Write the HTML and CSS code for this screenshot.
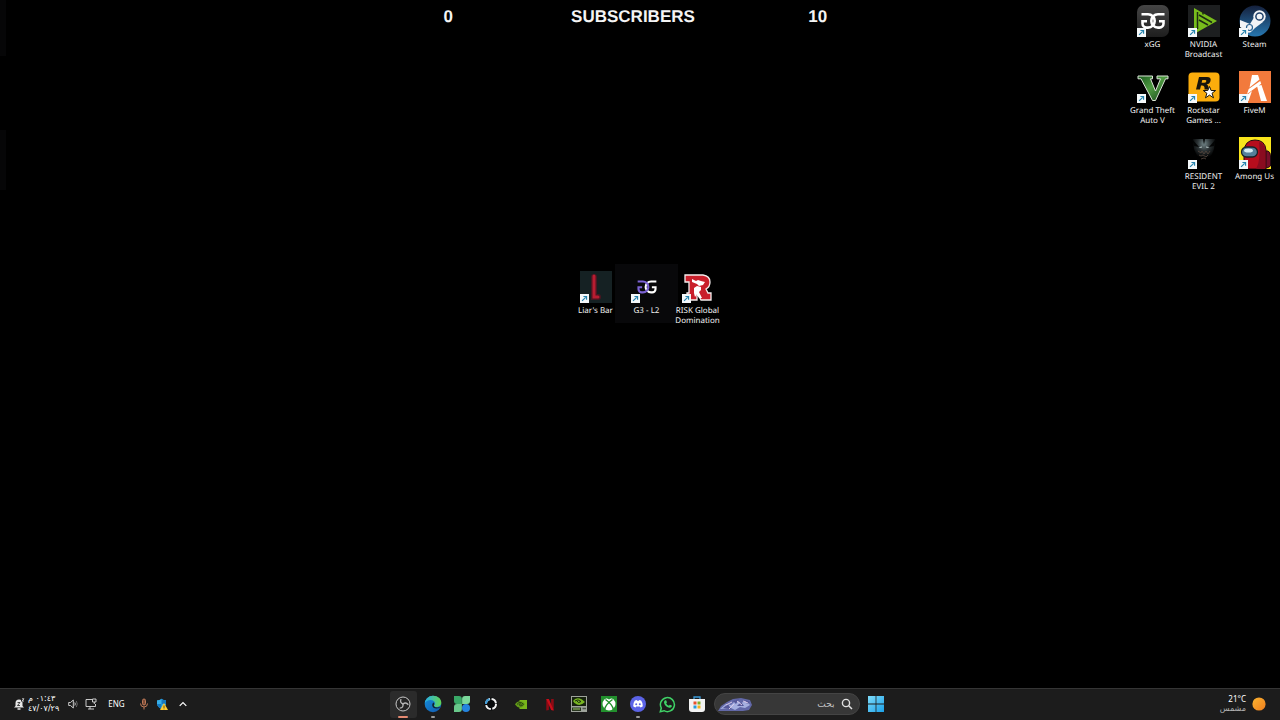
FILE: index.html
```html
<!DOCTYPE html>
<html lang="en">

<head>
    <meta charset="utf-8">
    <title>Desktop</title>
    <link rel="stylesheet" href="styles.css">
</head>

<body>
    <svg class="defs" aria-hidden="true">
        <symbol id="arrow" viewBox="0 0 10 10">
            <path d="M0 0h10v10H0z" fill="#f4f8fa"/>
            <path d="M2.3 7.7l4-4M3.8 2.8h3.5v3.5" fill="none" stroke="#2482ad" stroke-width="1.3"/>
        </symbol>
        <symbol id="letter-g" viewBox="0 0 32 32">
            <path d="M27.500 9.200H21a6.700 6.700 0 0 0 0 13.400h1.500a4 4 0 0 0 4-4v-2.300h-4.500" fill="none" stroke="currentColor" stroke-width="2.600"/>
        </symbol>
    </svg>

    <main class="desktop">
        <header class="counter">
            <span>0</span>
            <span>SUBSCRIBERS</span>
            <span>10</span>
        </header>

        <div class="edge edge-top"></div>
        <div class="edge edge-low"></div>

        <nav class="shortcuts shortcuts-right">
            <a class="shortcut" href="#">
                <svg class="icon" viewBox="0 0 32 32">
                    <defs><linearGradient id="xgg" x2="0" y2="1"><stop stop-color="#454545"/><stop offset="1" stop-color="#1e1e1e"/></linearGradient></defs>
                    <rect width="32" height="32" rx="7" fill="url(#xgg)"/>
                    <g color="#fff">
                        <use href="#letter-g" width="32" height="32"/>
                        <use href="#letter-g" width="32" height="32" transform="matrix(-1 0 0 1 32 0)"/>
                    </g>
                    <use href="#arrow" y="23" width="9" height="9"/>
                </svg>
                <span>xGG</span>
            </a>
            <a class="shortcut" href="#">
                <svg class="icon" viewBox="0 0 32 32">
                    <rect width="32" height="32" fill="#1d1f20"/>
                    <path d="M6 3l23 13L6 29z" fill="#78bd1c"/>
                    <path d="M9.500 7v17M11 10l13 7.500M11 15l9 5M15 6v3.500" fill="none" stroke="#1d2a12" stroke-width="1.500"/>
                    <use href="#arrow" y="23" width="9" height="9"/>
                </svg>
                <span>NVIDIA Broadcast</span>
            </a>
            <a class="shortcut" href="#">
                <svg class="icon" viewBox="0 0 32 32">
                    <defs><linearGradient id="steam" x2="0" y2="1"><stop stop-color="#15203c"/><stop offset="1" stop-color="#2777b0"/></linearGradient></defs>
                    <circle cx="16" cy="16" r="15.500" fill="url(#steam)"/>
                    <path d="M1 15l10 4 5-8 8 6-8 6-3 3a4 4 0 0 1-7-1L1 22z" fill="#f2f4f6"/>
                    <circle cx="20.500" cy="11.500" r="6.200" fill="#f2f4f6"/>
                    <circle cx="20.500" cy="11.500" r="3.600" fill="#f2f4f6" stroke="#1f4069" stroke-width="1.500"/>
                    <circle cx="10.500" cy="22.500" r="3" fill="none" stroke="#2a6392" stroke-width="1.200"/>
                    <use href="#arrow" y="23" width="9" height="9"/>
                </svg>
                <span>Steam</span>
            </a>
            <a class="shortcut" href="#">
                <svg class="icon" viewBox="0 0 32 32">
                    <defs><linearGradient id="gta" x2="1" y2="1"><stop stop-color="#1c5a20"/><stop offset=".45" stop-color="#4f9c42"/><stop offset="1" stop-color="#143d18"/></linearGradient></defs>
                    <path d="M1 5h14.500v2.800h-2L18.500 20l5-12.200h-3.500V5h11v2.800h-2.500L18.500 29.500h-3L4 7.800H1z" fill="url(#gta)" stroke="#dce6d8"/>
                    <use href="#arrow" y="23" width="9" height="9"/>
                </svg>
                <span>Grand Theft Auto V</span>
            </a>
            <a class="shortcut" href="#">
                <svg class="icon" viewBox="0 0 32 32">
                    <rect x=".5" y="1.500" width="31" height="29" rx="4" fill="#fbad0c"/>
                    <path d="M11 6h8q4.500 0 3.500 4-.7 3-4 3.500 2.500.8 2 5h-4q.5-4-2.500-4h-1l-1 4H8zm3.300 3l-.7 2.800h2.500q1.900 0 2.200-1.500.3-1.300-1.300-1.300z" fill="#18140c"/>
                    <path d="M21.500 15.500l1.600 4h4.500L24 22.300l1.500 4.500-4-2.700-4 2.700 1.400-4.500-3.600-2.800h4.500z" fill="#fff" stroke="#18140c"/>
                    <use href="#arrow" y="23" width="9" height="9"/>
                </svg>
                <span>Rockstar Games ...</span>
            </a>
            <a class="shortcut" href="#">
                <svg class="icon" viewBox="0 0 32 32">
                    <rect width="32" height="32" fill="#f27a3c"/>
                    <path d="M13 4h6l1.500 4.500-10 8zM9.700 18l11.500-8 1 2.800L8 23zM7.500 24.500L13 20 9.500 30H5.800zM18 15l4.500-1L28 30h-6z" fill="#fff"/>
                    <use href="#arrow" y="23" width="9" height="9"/>
                </svg>
                <span>FiveM</span>
            </a>
            <a class="shortcut shortcut-second" href="#">
                <svg class="icon" viewBox="0 0 32 32">
                    <defs><radialGradient id="evil" cx=".5" cy=".2" r=".6"><stop stop-color="#74878a"/><stop offset=".5" stop-color="#2b3234"/><stop offset="1" stop-color="#000"/></radialGradient></defs>
                    <path d="M5 2h22l-1 10-3 8-7 6-6-5-4-9z" fill="url(#evil)"/>
                    <path d="M4 2l7 8-5-1zM28 2l-7 8 5-1zM15 2l1 6 1-6z" fill="#030404"/>
                    <path d="M11.500 10.500l2.500-.5M18 10l2.500.5" stroke="#b4c4c4"/>
                    <path d="M10 14l3 2 1-2 2 3 2-3 2 3 2-3M11 18l2 1 2-1 3 2 2-2M13 22l3-1 2 1" fill="none" stroke="#57483f" stroke-width=".8"/>
                    <use href="#arrow" y="23" width="9" height="9"/>
                </svg>
                <span>RESIDENT EVIL 2</span>
            </a>
            <a class="shortcut" href="#">
                <svg class="icon" viewBox="0 0 32 32">
                    <rect width="32" height="32" fill="#f9e51c"/>
                    <path d="M26 14h3q2.500 1 2.500 5v10q-2 2-5.500 2z" fill="#780d29" stroke="#240a12"/>
                    <path d="M5 32V14Q6 3 16 3q10 0 11 10v19z" fill="#b60d1d" stroke="#240a12"/>
                    <path d="M20 5q6 2 6 9v18h-9q5-8 3-27z" fill="#8a0c20"/>
                    <rect x="2.500" y="10" width="16" height="10" rx="5" fill="#55809b" stroke="#182229" stroke-width="1.300"/>
                    <ellipse cx="9.500" cy="13.500" rx="4.500" ry="2" fill="#d5edf5"/>
                    <use href="#arrow" y="23" width="9" height="9"/>
                </svg>
                <span>Among Us</span>
            </a>
        </nav>

        <nav class="shortcuts shortcuts-middle">
            <a class="shortcut" href="#">
                <svg class="icon" viewBox="0 0 32 32">
                    <rect width="32" height="32" fill="#152123"/>
                    <path d="M14 6v20h4" fill="none" stroke="#4a1621" stroke-width="6" stroke-linecap="round"/>
                    <path d="M14 5v21h4" fill="none" stroke="#b81c31" stroke-width="3" stroke-linecap="round"/>
                    <use href="#arrow" y="23" width="9" height="9"/>
                </svg>
                <span>Liar's Bar</span>
            </a>
            <a class="shortcut shortcut-hover" href="#">
                <svg class="icon" viewBox="0 0 32 32">
                    <use href="#letter-g" x="3" y="3" width="26" height="26" color="#fff"/>
                    <use href="#letter-g" x="3" y="3" width="26" height="26" color="#7c63d4" transform="matrix(-1 0 0 1 32 0)"/>
                    <use href="#arrow" y="23" width="9" height="9"/>
                </svg>
                <span>G3 - L2</span>
            </a>
            <a class="shortcut" href="#">
                <svg class="icon" viewBox="0 0 32 32">
                    <path d="M3 4h18q7 1 7 7 0 5-4 7l2 4h3v7H19l-4-7v7H5v-7h2V11H3z" fill="#c91f2b" stroke="#f5eeee" stroke-width="1.300"/>
                    <path d="M10 8l4 2 2-1 3 1 4 1-2 3-4 1-2-2-5-2zM12 17l3-2 4 1v3l-2 2 3 6h-3l-2-4-2 3-1-4z" fill="#fff"/>
                    <use href="#arrow" y="23" width="9" height="9"/>
                </svg>
                <span>RISK Global Domination</span>
            </a>
        </nav>
    </main>

    <footer class="taskbar">
        <div class="tray">
            <button class="clock">
                <svg width="12" height="12" viewBox="0 0 12 12">
                    <path d="M2.500 8V5a3.500 3.500 0 0 1 7 0v3l1.500 1.500H1z" fill="#e8e8e8"/>
                    <path d="M4.500 11h3" stroke="#e8e8e8" stroke-width="1.500"/>
                    <path d="M8 0h4v3.500H8z" fill="#1c1c1c"/>
                    <path d="M9 .8h2L9 3h2" fill="none" stroke="#e8e8e8" stroke-width=".8"/>
                    <path d="M4.500 4.500H7l-2.500 3H7" fill="none" stroke="#1c1c1c" stroke-width=".8"/>
                </svg>
                <span class="clock-text" dir="rtl" lang="ar"><span>٠١:٤٣ م</span><span>٤٧/٠٧/٢٩</span></span>
            </button>
            <button class="status" aria-label="Volume and network">
                <svg width="11" height="12" viewBox="0 0 11 12" fill="none" stroke="#dedede" stroke-width=".9">
                    <path d="M.7 4.500h1.800L5.300 2v8L2.500 7.500H.7zM6.800 4.500q1 1.500 0 3"/>
                    <path d="M8.300 3q2 3 0 6" stroke="#707070"/>
                </svg>
                <svg width="12" height="12" viewBox="0 0 12 12" fill="none" stroke="#dedede" stroke-width=".9">
                    <path d="M7 1.500H1v7h9.500V6M3 11h6M5 8.500V11M7.500 1h3.500v3H7.500zM9.300 4v2"/>
                </svg>
            </button>
            <button class="lang">ENG</button>
            <button class="tray-icon" aria-label="Microphone">
                <svg width="12" height="12" viewBox="0 0 12 12" fill="none" stroke="#c07a58">
                    <rect x="4.500" y="1" width="3" height="6" rx="1.500" fill="#7d4d38"/>
                    <path d="M2.500 5.500q0 3.500 3.500 3.500t3.500-3.500M6 9v2.500"/>
                </svg>
            </button>
            <button class="tray-icon" aria-label="Security">
                <svg width="12" height="12" viewBox="0 0 12 12">
                    <path d="M5.500.7q2 1.500 4.500 1.500V6q-.5 3-4.500 5Q1.500 9 1 6V2.200Q3.500 2.200 5.500.7z" fill="#35aee8"/>
                    <path d="M5.500.7q2 1.500 4.500 1.500V6H5.500zM1 6h4.500v5Q1.500 9 1 6z" fill="#1579c1"/>
                    <path d="M8 5l4 7H4z" fill="#ffcc32"/>
                    <path d="M8 7.500V10M8 10.500v.8" stroke="#4a3812" stroke-width=".8"/>
                </svg>
            </button>
            <button class="tray-icon" aria-label="Show hidden icons">
                <svg width="10" height="10" viewBox="0 0 10 10"><path d="M1.700 6.800L5 3.500l3.300 3.300" fill="none" stroke="#fff" stroke-width="1.200"/></svg>
            </button>
        </div>

        <div class="center">
            <div class="apps">
                <button class="app app-active" aria-label="OBS Studio">
                    <svg width="16" height="16" viewBox="0 0 16 16">
                        <circle cx="8" cy="8" r="7" fill="#242424" stroke="#c9c9c9"/>
                        <g fill="none" stroke="#b5b5b5" stroke-width="1.300">
                            <path d="M8.300 8Q4.500 7 6 3"/>
                            <path d="M8.300 8Q4.500 7 6 3" transform="rotate(120 8 8)"/>
                            <path d="M8.300 8Q4.500 7 6 3" transform="rotate(240 8 8)"/>
                        </g>
                    </svg>
                </button>
                <button class="app app-open" aria-label="Microsoft Edge">
                    <svg width="18" height="18" viewBox="0 0 18 18">
                        <defs>
                            <linearGradient id="edge-a" x2="1"><stop stop-color="#28aee8"/><stop offset="1" stop-color="#62d453"/></linearGradient>
                            <linearGradient id="edge-b" x2="1" y2="1"><stop stop-color="#1690dc"/><stop offset="1" stop-color="#1157ad"/></linearGradient>
                        </defs>
                        <circle cx="9" cy="9" r="8.300" fill="url(#edge-b)"/>
                        <path d="M.7 8.500A8.300 8.300 0 0 1 9 .7c5 0 8.300 3.300 8.300 6.800 0 3-2.300 4.500-4.800 4.500-2 0-2.500-.8-2.500-1.300s1-.9 1-2.400C11 6.500 9 5 6.500 5S1.500 6.500.7 8.500z" fill="url(#edge-a)"/>
                        <path d="M9.500 7.500q-1.500 1-1.300 2.800.5 3.200 4.300 3.200 3 0 4.300-1.800-1.800.9-3.800.8-3-.2-3.200-2 1-1.300 0-3z" fill="#14202a"/>
                    </svg>
                </button>
                <button class="app" aria-label="Clover">
                    <svg width="16" height="16" viewBox="0 0 16 16">
                        <path d="M0 0h5q2.900 0 2.900 3v4.900H3Q0 7.900 0 5z" fill="#39a967"/>
                        <path d="M16 0h-5Q8.100 0 8.100 3v4.900H13q3 0 3-2.900z" fill="#7bd89b"/>
                        <path d="M0 16h5q2.900 0 2.900-3V8.100H3q-3 0-3 2.900z" fill="#69c98b"/>
                        <circle cx="12" cy="12" r="4" fill="#2584df"/>
                    </svg>
                </button>
                <button class="app" aria-label="Game launcher">
                    <svg width="14" height="14" viewBox="0 0 14 14">
                        <circle cx="7" cy="7" r="6.500" fill="#080a0c"/>
                        <circle cx="7" cy="7" r="5" fill="none" stroke="#f3f3f3" stroke-width="2" stroke-dasharray="6.300 1.550"/>
                        <path d="M2 7a5 5 0 0 1 3.500-4.800" fill="none" stroke="#3b9bd8" stroke-width="2"/>
                    </svg>
                </button>
                <button class="app" aria-label="NVIDIA">
                    <svg width="12" height="9" viewBox="0 0 12 9">
                        <path d="M4.500 0H12v9H4.500z" fill="#78b51a"/>
                        <path d="M0 4.500Q2 1 5.500 1.200 8.500 1.500 10 4 8 7.700 5 7.700 2 7.500 0 4.500z" fill="#629b18"/>
                        <path d="M2 4.500q3-4 6.500-.2Q5.500 7.500 4 4.500q1-1.500 2.500 0" fill="none" stroke="#23370d" stroke-width=".9"/>
                    </svg>
                </button>
                <button class="app" aria-label="Netflix">
                    <svg width="8" height="13" viewBox="0 0 8 14">
                        <path d="M0 1h2.800v12L0 13.500zM5.200 1H8v12.500L5.200 13z" fill="#8e0a14"/>
                        <path d="M0 1h2.800L8 13.500 5.200 13z" fill="#c90e1a"/>
                    </svg>
                </button>
                <button class="app" aria-label="NVIDIA Control Panel">
                    <svg width="16" height="16" viewBox="0 0 16 16">
                        <path d="M0 0h16v16H0z" fill="#9ea39b"/>
                        <path d="M1 1h14v9H1z" fill="#17220f"/>
                        <path d="M2 5q3-4.500 9-1.500L14 6q-4 4-8 2.500Q3.500 8 2 5z" fill="#79b722"/>
                        <path d="M4 5q3-2.500 6 .5Q7 8 6 5" fill="none" stroke="#1b2b0c"/>
                        <path d="M1 11.500h9V15H1z" fill="#28351f"/>
                        <path d="M2 13h7" stroke="#9bc466"/>
                        <path d="M11.500 12.500H15" stroke="#4c5548" stroke-width="1.500"/>
                    </svg>
                </button>
                <button class="app" aria-label="Xbox">
                    <svg width="16" height="16" viewBox="0 0 16 16">
                        <path d="M0 0h16v16H0z" fill="#22902d"/>
                        <circle cx="8" cy="8" r="6.500" fill="#fff"/>
                        <path d="M4 2.200Q6 2.200 8 3.600q2-1.400 4-1.400l-1-1.200H5z" fill="#22902d"/>
                        <path d="M4.500 3.500Q11 8 12.500 13.500M11.500 3.500Q5 8 3.500 13.500" fill="none" stroke="#22902d" stroke-width="1.500"/>
                    </svg>
                </button>
                <button class="app app-open" aria-label="Discord">
                    <svg width="16" height="16" viewBox="0 0 16 16">
                        <circle cx="8" cy="8" r="8" fill="#5b63e6"/>
                        <path d="M4.700 4.700q1-.6 2-.7l.4.700h1.800l.4-.7q1 .1 2 .7Q13 7 12.800 10.300q-1 .9-2.300 1.200L9.800 10.500H6.200l-.7 1q-1.300-.3-2.300-1.200Q3 7 4.700 4.700z" fill="#fff"/>
                        <circle cx="6.200" cy="8.200" r="1" fill="#5b63e6"/>
                        <circle cx="9.800" cy="8.200" r="1" fill="#5b63e6"/>
                    </svg>
                </button>
                <button class="app" aria-label="WhatsApp">
                    <svg width="17" height="17" viewBox="0 0 17 17">
                        <path d="M1.300 15.700l1-3.700a7 7 0 1 1 2.700 2.700z" fill="#1c1c1c" stroke="#3fd166" stroke-width="1.500"/>
                        <path d="M5.300 5l1-.8h.8l.9 2-.8 1.200q1 1.700 2.700 2.400l1-1.100 1.900.9v.8q-.8 1.500-2.500 1.300Q5.500 10.500 5 6.500z" fill="#3fd166"/>
                    </svg>
                </button>
                <button class="app" aria-label="Microsoft Store">
                    <svg width="16" height="16" viewBox="0 0 16 16">
                        <path d="M5 4V1h6v3" fill="none" stroke="#3b9ad8" stroke-width="1.300"/>
                        <path d="M0 3h16v10q0 3-3 3H3q-3 0-3-3z" fill="#f2f2f2"/>
                        <path d="M4.500 5.500h3v3h-3z" fill="#e8502d"/>
                        <path d="M8.500 5.500h3v3h-3z" fill="#7dae27"/>
                        <path d="M4.500 9.500h3v3h-3z" fill="#259cdc"/>
                        <path d="M8.500 9.500h3v3h-3z" fill="#f3b41e"/>
                    </svg>
                </button>
            </div>

            <div class="search">
                <svg width="34" height="14" viewBox="0 0 34 14" aria-hidden="true">
                    <path d="M0 14l3-5 6-4 6-3 8-1 9 2 2 5-3 5-6 1z" fill="#6268a8"/>
                    <path d="M2 12l6-5 5 1 5-5 5 3 5-2 4 4-5 3-5-1-5 3-4-2z" fill="#a5afe0"/>
                    <path d="M5 11l5-4 3 5zM15 4l6-2-3 5zM19 9l4-4 3 4zM27 3l5 2-3 2z" fill="#55589a"/>
                    <path d="M8 8l6-3M19 4l5 4M25 4l5 2M11 12l5-5" stroke="#d9c8e8"/>
                </svg>
                <input class="search-input" type="search" dir="rtl" lang="ar" placeholder="بحث" aria-label="بحث">
                <svg width="12" height="12" viewBox="0 0 12 12" aria-hidden="true">
                    <circle cx="5" cy="5" r="3.600" fill="none" stroke="#e2e2e2" stroke-width="1.400"/>
                    <path d="M7.700 7.700L11 11" stroke="#e2e2e2" stroke-width="1.500"/>
                </svg>
            </div>

            <button class="start" aria-label="Start">
                <svg width="16" height="16" viewBox="0 0 16 16">
                    <defs><linearGradient id="win" x2="1" y2="1"><stop stop-color="#7fdcfa"/><stop offset="1" stop-color="#1ba1e9"/></linearGradient></defs>
                    <path d="M0 0h7.600v7.600H0zM8.400 0H16v7.600H8.400zM0 8.400h7.600V16H0zM8.400 8.400H16V16H8.400z" fill="url(#win)"/>
                </svg>
            </button>
        </div>

        <button class="weather">
            <span class="weather-text" lang="ar"><span>21°C</span><span class="weather-sky">مشمس</span></span>
            <svg width="14" height="14" viewBox="0 0 14 14">
                <defs><linearGradient id="sun" x2="1" y2="1"><stop stop-color="#fbb431"/><stop offset="1" stop-color="#ee7d1d"/></linearGradient></defs>
                <circle cx="7" cy="7" r="6.600" fill="url(#sun)"/>
            </svg>
        </button>
    </footer>
</body>

</html>
```
FILE: styles.css
```css
* {
    box-sizing: border-box;
}

body {
    margin: 0;
    min-height: 100vh;
    display: flex;
    flex-direction: column;
    background: #000;
    color: #fff;
    font-family: "Noto Sans", "Open Sans", "DejaVu Sans", sans-serif;
    font-size: 8px;
    line-height: 10px;
    text-rendering: geometricPrecision;
}

button {
    display: flex;
    align-items: center;
    justify-content: center;
    padding: 0;
    border: 0;
    background: none;
    color: inherit;
    font: inherit;
}

svg {
    display: block;
    flex: none;
}

.defs {
    position: absolute;
    width: 0;
    height: 0;
}

.desktop {
    position: relative;
    flex: 1;
}

/* subscriber goal */
.counter {
    display: grid;
    grid-template-columns: 1fr 1fr 1fr;
    width: 554px;
    margin: 0 auto;
    padding: 7px 14px 0 0;
    color: #f4f4f4;
    font: bold 17px/20px "Liberation Sans", Arial, sans-serif;
    text-align: center;
    box-sizing: content-box;
}

.edge {
    position: absolute;
    left: 0;
    width: 6px;
    background: #060607;
}

.edge-top {
    top: 0;
    height: 56px;
}

.edge-low {
    top: 130px;
    height: 60px;
}

/* desktop icons */
.shortcuts {
    position: absolute;
    display: grid;
    grid-template-columns: repeat(3, 51px);
    grid-auto-rows: 66px;
}

.shortcuts-right {
    top: 0;
    right: 0;
}

.shortcuts-middle {
    top: 266px;
    left: calc(50% - 70px);
}

.shortcut {
    display: flex;
    flex-direction: column;
    align-items: center;
    gap: 3px;
    padding-top: 5px;
    color: #f0f0f0;
    text-align: center;
    text-decoration: none;
}

.shortcut-second {
    grid-column: 2;
}

.shortcut-hover {
    height: 59px;
    margin: -2px -6px 0;
    padding-top: 7px;
    background: #08080a;
}

.icon {
    width: 32px;
    height: 32px;
}

/* taskbar */
.taskbar {
    display: grid;
    grid-template-columns: 1fr auto 1fr;
    align-items: center;
    height: 32px;
    padding-bottom: 1px;
    border-top: 1px solid #353535;
    background: #1c1c1c;
}

.tray {
    display: flex;
    align-items: center;
    padding-left: 13px;
}

.clock {
    gap: 3px;
}

.clock-text {
    display: flex;
    flex-direction: column;
    width: 32px;
    font-family: "DejaVu Sans", sans-serif;
    text-align: left;
    white-space: nowrap;
}

.status {
    gap: 6px;
    margin-left: 8px;
}

.lang {
    width: 39px;
}

.tray-icon {
    width: 21px;
    height: 24px;
}

.lang + .tray-icon {
    width: 15px;
}

.center {
    display: flex;
    align-items: center;
    gap: 2px;
    padding-right: 2px;
}

.apps {
    display: flex;
    width: 323px;
}

.app {
    position: relative;
    flex: 1;
    height: 27px;
    margin: 0 1px;
    border-radius: 3px;
}

.app-active {
    background: #2b2b2b;
}

.app-active::after,
.app-open::after {
    content: "";
    position: absolute;
    bottom: 0;
    left: calc(50% - 2px);
    width: 4px;
    height: 2px;
    border-radius: 1px;
    background: #9a9a9a;
}

.app-active::after {
    left: calc(50% - 5px);
    width: 10px;
    background: #e58a72;
}

.search {
    display: flex;
    align-items: center;
    gap: 6px;
    width: 146px;
    height: 22px;
    padding: 0 6px 0 3px;
    border: 1px solid #444;
    border-radius: 11px;
    background: #373737;
}

.search-input {
    flex: 1;
    min-width: 0;
    padding: 0;
    border: 0;
    outline: 0;
    background: none;
    color: #fff;
    font: 9px/14px "DejaVu Sans", sans-serif;
}

.search-input::placeholder {
    color: #c4c4c4;
}

.start {
    width: 28px;
    height: 27px;
}

.weather {
    justify-self: end;
    gap: 6px;
    padding-right: 14px;
}

.weather-text {
    display: flex;
    flex-direction: column;
    text-align: right;
}

.weather-sky {
    color: #b5b5b5;
    font-family: "DejaVu Sans", sans-serif;
}
```
